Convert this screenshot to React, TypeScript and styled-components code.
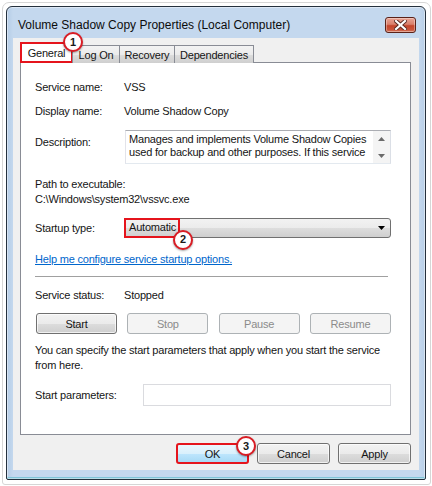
import React from 'react';
import styled, { createGlobalStyle } from 'styled-components';

const Global = createGlobalStyle`
  html, body { margin: 0; padding: 0; background: #fff; }
  body {
    font-family: "Liberation Sans", Arial, sans-serif;
    font-size: 11px;
    letter-spacing: -0.2px;
    color: #151515;
  }
  * { box-sizing: border-box; }
`;

const Outer = styled.div`
  margin: 2px 0 0 2px;
  width: 429px;
  height: 483px;
  border: 1px solid #d6d6d6;
  border-radius: 7px 7px 3px 3px;
  padding: 3px;
`;

const Window = styled.div`
  width: 420px;
  height: 474px;
  border: 1px solid #24303d;
  border-radius: 6px 6px 2px 2px;
  background: linear-gradient(90deg, #b4cce6 0px, #c4d8ee 6px, #c4d8ee 412px, #b8cfe8 418px);
  box-shadow: inset 0 0 0 1px rgba(255, 255, 255, 0.45), inset 0 -2px 0 #7fc4d8;
  display: flex;
  flex-direction: column;
  padding: 0 6px 9px;
`;

const TitleBar = styled.div`
  height: 31px;
  padding: 4px 3px 0 5px;
  display: flex;
  align-items: center;
  justify-content: space-between;
`;

const Title = styled.span`
  font-size: 12px;
  letter-spacing: 0;
  color: #0c0c0c;
`;

const CloseButton = styled.div`
  width: 31px;
  height: 16px;
  border: 1px solid #5a2219;
  border-radius: 3px;
  background: linear-gradient(#e9a394 0%, #d9806c 45%, #c4452c 55%, #c9553b 85%, #d9826a 100%);
  display: flex;
  align-items: center;
  justify-content: center;
  box-shadow: inset 0 0 0 1px rgba(255, 255, 255, 0.35);
`;

const Body = styled.div`
  flex: 1;
  background: #f0f0f0;
  padding: 4px 8px 6px 7px;
  display: flex;
  flex-direction: column;
`;

const TabRow = styled.div`
  display: flex;
  align-items: flex-end;
  height: 21px;
  margin-bottom: -1px;
  position: relative;
  z-index: 1;
`;

const Tab = styled.div<{ $w: number; $active?: boolean }>`
  position: relative;
  width: ${(p) => p.$w}px;
  height: ${(p) => (p.$active ? 21 : 18)}px;
  margin-left: ${(p) => (p.$active ? 0 : -1)}px;
  display: flex;
  align-items: center;
  justify-content: center;
  font-size: 11px;
  padding-top: ${(p) => (p.$active ? 0 : 1)}px;
  border: ${(p) => (p.$active ? '2px solid #e5141c' : '1px solid #898c95')};
  border-bottom: ${(p) => (p.$active ? '2px solid #e5141c' : 'none')};
  background: ${(p) => (p.$active ? '#fff' : 'linear-gradient(#f3f3f3, #ebebeb 50%, #dddddd 51%, #cfcfcf)')};
  &:first-child { margin-left: 0; }
`;

const Panel = styled.div`
  height: 373px;
  background: #fff;
  border: 1px solid #898c95;
  padding: 17px 19px 0 14px;
  display: flex;
  flex-direction: column;
`;

const Row = styled.div<{ $mt?: number; $h?: number; $align?: string }>`
  display: flex;
  align-items: ${(p) => p.$align || 'center'};
  margin-top: ${(p) => p.$mt || 0}px;
  height: ${(p) => p.$h || 15}px;
  line-height: 15px;
  position: relative;
`;

const Label = styled.span<{ $w?: number; $pt?: number }>`
  width: ${(p) => p.$w || 89}px;
  flex-shrink: 0;
  padding-top: ${(p) => p.$pt || 0}px;
`;

const Value = styled.span``;

const TextArea = styled.div`
  flex: 1;
  height: 34px;
  margin-left: 1px;
  border: 1px solid #abadb3;
  border-left-color: #e2e3ea;
  border-right-color: #dbdfe6;
  border-bottom-color: #e3e9ef;
  display: flex;
  background: #fff;
`;

const TextAreaText = styled.div`
  flex: 1;
  padding: 2px 0 0 3px;
  line-height: 13px;
  white-space: nowrap;
  overflow: hidden;
`;

const ScrollBar = styled.div`
  width: 17px;
  background: #f4f4f4;
  display: flex;
  flex-direction: column;
  align-items: center;
  justify-content: space-between;
  padding: 6px 0 5px;
`;

const Select = styled.div`
  flex: 1;
  height: 20px;
  border: 1px solid #707070;
  border-radius: 3px;
  background: linear-gradient(#f2f2f2, #ebebeb 50%, #dddddd 51%, #cfcfcf);
  display: flex;
  align-items: center;
  justify-content: space-between;
  padding-right: 5px;
  position: relative;
`;

const Highlight = styled.span`
  position: relative;
  height: 20px;
  width: 56px;
  margin: -1px 0 0 -1px;
  border: 2px solid #e5141c;
  display: flex;
  align-items: center;
  padding-left: 3px;
`;

const Link = styled.a`
  color: #0066cc;
  text-decoration: underline;
`;

const Separator = styled.div`
  margin-top: 9px;
  height: 1px;
  margin-right: 3px;
  background: #a0a0a0;
  flex-shrink: 0;
`;

const ButtonRow = styled.div<{ $mt?: number }>`
  display: flex;
  justify-content: space-between;
  margin-top: ${(p) => p.$mt || 0}px;
  padding-left: 1px;
  flex-shrink: 0;
`;

const Button = styled.div<{ $w?: number; $disabled?: boolean; $hot?: boolean }>`
  position: relative;
  width: ${(p) => p.$w || 81}px;
  height: 21px;
  border-radius: 3px;
  border: ${(p) => (p.$hot ? '2px solid #e5141c' : `1px solid ${p.$disabled ? '#adb2b5' : '#707070'}`)};
  background: ${(p) =>
    p.$hot
      ? 'linear-gradient(#eaf6fd, #d9f0fc 50%, #bee6fd 51%, #a7d9f5)'
      : p.$disabled
      ? '#f4f4f4'
      : 'linear-gradient(#f2f2f2, #ebebeb 50%, #dddddd 51%, #cfcfcf)'};
  color: ${(p) => (p.$disabled ? '#8b8b8b' : '#151515')};
  display: flex;
  align-items: center;
  justify-content: center;
  box-shadow: ${(p) => (p.$disabled || p.$hot ? 'none' : 'inset 0 0 0 1px rgba(255,255,255,0.7)')};
`;

const Paragraph = styled.div`
  margin-top: 9px;
  line-height: 15px;
  flex-shrink: 0;
`;

const Input = styled.div`
  flex: 1;
  height: 22px;
  border: 1px solid #dadbdf;
  background: #fff;
`;

const Footer = styled.div`
  margin-top: 8px;
  display: flex;
  justify-content: flex-end;
  gap: 8px;
`;

const Badge = styled.span<{ $left: number; $top: number }>`
  position: absolute;
  left: ${(p) => p.$left}px;
  top: ${(p) => p.$top}px;
  width: 20px;
  height: 20px;
  border-radius: 50%;
  background: #fff;
  border: 2px solid #d91d25;
  box-shadow: 0 1px 2px rgba(0, 0, 0, 0.35);
  display: flex;
  align-items: center;
  justify-content: center;
  font-weight: bold;
  font-size: 11px;
  letter-spacing: 0;
  color: #1a1a1a;
  z-index: 5;
`;

const Arrow = ({ up }: { up?: boolean }) => (
  <svg width="7" height="4" viewBox="0 0 7 4">
    <path d={up ? 'M0 4 L3.5 0 L7 4 Z' : 'M0 0 L7 0 L3.5 4 Z'} fill="#6a6a6a" />
  </svg>
);

const CloseX = () => (
  <svg width="13" height="10" viewBox="0 0 13 10">
    <path d="M2 1 L11 9 M11 1 L2 9" stroke="#5a2a22" strokeWidth="4" strokeLinecap="square" />
    <path d="M2 1 L11 9 M11 1 L2 9" stroke="#ffffff" strokeWidth="2.2" strokeLinecap="square" />
  </svg>
);

export default function App() {
  return (
    <>
      <Global />
      <Outer>
        <Window>
          <TitleBar>
            <Title>Volume Shadow Copy Properties (Local Computer)</Title>
            <CloseButton>
              <CloseX />
            </CloseButton>
          </TitleBar>
          <Body>
            <TabRow>
              <Tab $w={53} $active>
                General
                <Badge $left={41} $top={-12}>1</Badge>
              </Tab>
              <Tab $w={48}>Log On</Tab>
              <Tab $w={56}>Recovery</Tab>
              <Tab $w={80}>Dependencies</Tab>
            </TabRow>
            <Panel>
              <Row>
                <Label>Service name:</Label>
                <Value>VSS</Value>
              </Row>
              <Row $mt={9}>
                <Label>Display name:</Label>
                <Value>Volume Shadow Copy</Value>
              </Row>
              <Row $mt={11} $h={34} $align="flex-start">
                <Label $pt={5}>Description:</Label>
                <TextArea>
                  <TextAreaText>
                    Manages and implements Volume Shadow Copies
                    <br />
                    used for backup and other purposes. If this service
                  </TextAreaText>
                  <ScrollBar>
                    <Arrow up />
                    <Arrow />
                  </ScrollBar>
                </TextArea>
              </Row>
              <Row $mt={13}>
                <Label $w={200}>Path to executable:</Label>
              </Row>
              <Row>
                <Value>C:\Windows\system32\vssvc.exe</Value>
              </Row>
              <Row $mt={11} $h={20}>
                <Label>Startup type:</Label>
                <Select>
                  <Highlight>
                    Automatic
                    <Badge $left={47} $top={10}>2</Badge>
                  </Highlight>
                  <svg width="7" height="4" viewBox="0 0 7 4">
                    <path d="M0 0 L7 0 L3.5 4 Z" fill="#000" />
                  </svg>
                </Select>
              </Row>
              <Row $mt={14}>
                <Link>Help me configure service startup options.</Link>
              </Row>
              <Separator />
              <Row $mt={11}>
                <Label>Service status:</Label>
                <Value>Stopped</Value>
              </Row>
              <ButtonRow $mt={10}>
                <Button>Start</Button>
                <Button $disabled>Stop</Button>
                <Button $disabled>Pause</Button>
                <Button $disabled>Resume</Button>
              </ButtonRow>
              <Paragraph>
                You can specify the start parameters that apply when you start the service
                <br />
                from here.
              </Paragraph>
              <Row $mt={11} $h={22}>
                <Label $w={108}>Start parameters:</Label>
                <Input />
              </Row>
            </Panel>
            <Footer>
              <Button $w={73} $hot>
                OK
                <Badge $left={58} $top={-9}>3</Badge>
              </Button>
              <Button $w={73}>Cancel</Button>
              <Button $w={73}>Apply</Button>
            </Footer>
          </Body>
        </Window>
      </Outer>
    </>
  );
}
